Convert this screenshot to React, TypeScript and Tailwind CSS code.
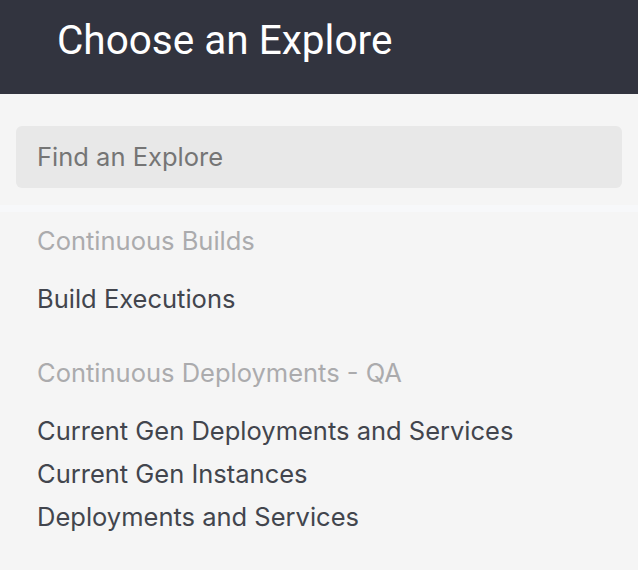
import React from "react";

const groups = [
  { title: "Continuous Builds", items: ["Build Executions"] },
  {
    title: "Continuous Deployments - QA",
    items: ["Current Gen Deployments and Services", "Current Gen Instances", "Deployments and Services"],
  },
];

export default function App() {
  return (
    <div className="w-[638px] h-[570px] overflow-hidden bg-[#f5f5f5] flex flex-col" style={{ fontFamily: "Inter, 'Noto Sans', sans-serif" }}>
      <div className="h-[94px] shrink-0 bg-[#32343f] flex items-start pt-[20px] pl-[57px]">
        <h1 className="text-white text-[40.5px] leading-none font-normal" style={{ fontFamily: "Roboto, 'Open Sans', sans-serif" }}>
          Choose an Explore
        </h1>
      </div>
      <div className="pt-[32px] pb-[17px] px-[16px]">
        <div className="h-[62px] rounded-[6px] bg-[#e8e8e8] flex items-center pl-[21px]">
          <input
            className="w-full bg-transparent outline-none text-[25.5px] text-[#42454d] placeholder:text-[#757575]"
            placeholder="Find an Explore"
          />
        </div>
      </div>
      <div className="h-[7px] bg-[#f7f8fa]" />
      <div className="pt-[13px] pl-[37px] flex flex-col gap-[37px]">
        {groups.map((g) => (
          <div key={g.title} className="flex flex-col">
            <div className="text-[25.5px] leading-8 text-[#ababad] mb-[20px]">{g.title}</div>
            {g.items.map((it) => (
              <div key={it} className="text-[25.5px] leading-[43px] text-[#42454d]">
                {it}
              </div>
            ))}
          </div>
        ))}
      </div>
    </div>
  );
}
